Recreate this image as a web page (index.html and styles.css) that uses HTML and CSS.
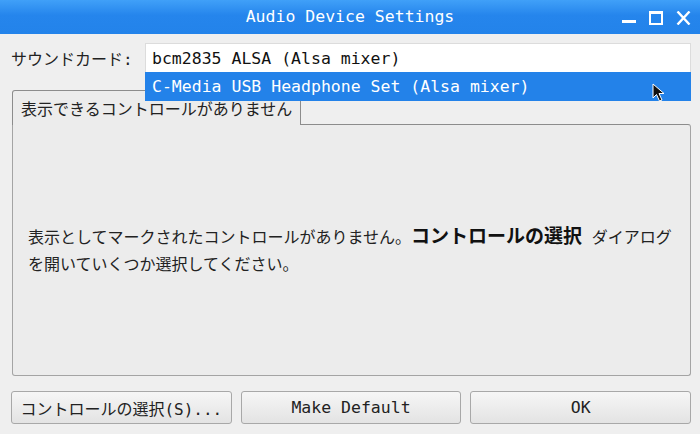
FILE: index.html
```html
<!DOCTYPE html>
<html lang="ja">
<head>
    <meta charset="UTF-8">
    <title>Audio Device Settings</title>
    <link rel="stylesheet" href="styles.css">
</head>
<body>
    <div class="window">
        <div class="titlebar">
            <span></span>
            <span class="title">Audio Device Settings</span>
            <div class="win-controls">
                <svg width="15" height="14" viewBox="0 0 15 14"><rect x="0" y="9" width="14" height="3" fill="#fff"/></svg>
                <svg width="15" height="14" viewBox="0 0 15 14"><rect x="1" y="1" width="12" height="12" fill="none" stroke="#fff" stroke-width="2"/><rect x="1" y="0" width="12" height="3" fill="#fff"/></svg>
                <svg width="15" height="14" viewBox="0 0 15 14"><path d="M1.5 0.5 L13.5 13.5 M13.5 0.5 L1.5 13.5" stroke="#fff" stroke-width="2.4"/></svg>
            </div>
        </div>

        <div class="content">
            <div class="card-row">
                <label class="card-label">サウンドカード:</label>
                <div class="combo">
                    <span class="mono">bcm2835 ALSA (Alsa mixer)</span>
                    <div class="combo-list">
                        <span class="mono">C-Media USB Headphone Set (Alsa mixer)</span>
                    </div>
                </div>
            </div>

            <div class="tabs">
                <div class="tab">表示できるコントロールがありません</div>
                <div class="pane">
                    <p class="message">表示としてマークされたコントロールがありません。<b>コントロールの選択</b> ダイアログを開いていくつか選択してください。</p>
                </div>
            </div>

            <div class="buttons">
                <button>コントロールの選択(S)...</button>
                <button class="mono">Make Default</button>
                <button class="mono">OK</button>
            </div>
        </div>

        <svg class="cursor" width="14" height="20" viewBox="0 0 14 20">
            <path d="M1 1 L1 15 L4.5 11.5 L7.5 18 L10 17 L7 10.5 L12 10.5 Z" fill="#111" stroke="#fff" stroke-width="1"/>
        </svg>
    </div>
</body>
</html>
```

FILE: styles.css
```css
html, body {
    margin: 0;
    padding: 0;
}
body {
    width: 700px;
    height: 434px;
    overflow: hidden;
    background-color: #efefef;
    font-family: "DejaVu Sans Mono", "Noto Sans CJK JP", monospace;
    font-size: 16px;
    color: #222;
}
.window {
    position: relative;
    height: 434px;
}
.mono {
    font-family: "DejaVu Sans Mono", monospace;
    font-size: 16.5px;
}
.titlebar {
    height: 34px;
    display: grid;
    grid-template-columns: 1fr auto 1fr;
    align-items: center;
    background: linear-gradient(#40a0f8, #2585ec 45%, #2383ea);
    color: #fff;
}
.title {
    font-size: 16.5px;
    padding-bottom: 1px;
}
.win-controls {
    display: flex;
    justify-content: flex-end;
    gap: 12px;
    padding-right: 9px;
    padding-top: 1px;
}
.content {
    padding: 9px 9px 9px 11px;
}
.card-row {
    display: flex;
    align-items: center;
    height: 29px;
}
.card-label {
    width: 134px;
    font-size: 16px;
}
.combo {
    flex: 1;
    position: relative;
    height: 29px;
    box-sizing: border-box;
    background-color: #fff;
    border: 1px solid #dcdcdc;
    border-bottom: none;
    display: flex;
    align-items: center;
    padding-left: 6px;
    color: #111;
}
.combo-list {
    position: absolute;
    left: -1px;
    right: -1px;
    top: 28px;
    height: 29px;
    background-color: #2382e9;
    color: #fff;
    display: flex;
    align-items: center;
    padding-left: 7px;
    z-index: 2;
}
.tabs {
    margin-top: 18px;
    margin-left: 1px;
}
.tab {
    width: 289px;
    height: 35px;
    box-sizing: border-box;
    border: 1px solid #8c8c8c;
    border-bottom: none;
    border-radius: 3px 3px 0 0;
    background-color: #ececec;
    padding-left: 8px;
    display: flex;
    align-items: center;
    font-family: "Noto Sans CJK JP", sans-serif;
    position: relative;
    margin-bottom: -1px;
    z-index: 1;
}
.pane {
    height: 252px;
    box-sizing: border-box;
    border: 1px solid #a4a4a4;
    border-top-color: #8c8c8c;
    border-radius: 0 3px 3px 3px;
    background-color: #ececec;
    display: flex;
    align-items: center;
    padding: 2px 14px 0 15px;
}
.message {
    margin: 0;
    font-size: 16px;
    line-height: 27px;
}
.message b {
    font-family: "Noto Sans CJK JP", sans-serif;
    font-size: 19px;
    line-height: 1;
    color: #111;
}
.buttons {
    display: flex;
    gap: 9px;
    margin-top: 15px;
}
.buttons button {
    flex: 1;
    height: 33px;
    border: 1px solid #a8a8a8;
    border-radius: 3px;
    background: linear-gradient(#f6f6f6, #e3e3e3);
    color: #222;
    font-family: "DejaVu Sans Mono", "Noto Sans CJK JP", monospace;
    font-size: 16px;
    padding: 0;
}
.buttons button.mono {
    font-size: 16.5px;
}
.cursor {
    position: absolute;
    left: 652px;
    top: 83px;
    z-index: 3;
}
```
